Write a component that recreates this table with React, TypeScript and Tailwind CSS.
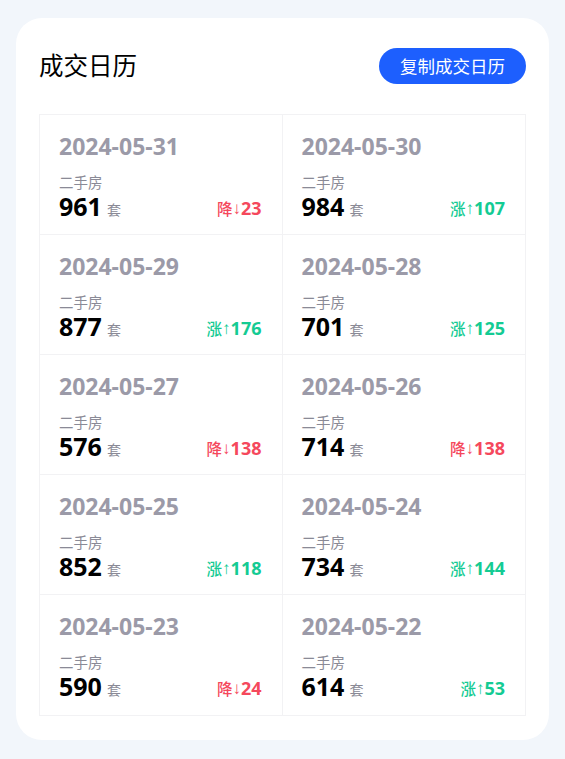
import React from "react";

type Day = { date: string; count: number; up: boolean; diff: number };

const days: Day[] = [
  { date: "2024-05-31", count: 961, up: false, diff: 23 },
  { date: "2024-05-30", count: 984, up: true, diff: 107 },
  { date: "2024-05-29", count: 877, up: true, diff: 176 },
  { date: "2024-05-28", count: 701, up: true, diff: 125 },
  { date: "2024-05-27", count: 576, up: false, diff: 138 },
  { date: "2024-05-26", count: 714, up: false, diff: 138 },
  { date: "2024-05-25", count: 852, up: true, diff: 118 },
  { date: "2024-05-24", count: 734, up: true, diff: 144 },
  { date: "2024-05-23", count: 590, up: false, diff: 24 },
  { date: "2024-05-22", count: 614, up: true, diff: 53 },
];

const DayCell = ({ d, idx }: { d: Day; idx: number }) => (
  <div
    className={
      "h-[120px] pl-[19px] pr-5 pt-[17px] border-[#f2f2f4] " +
      (idx % 2 === 0 ? "border-r " : "") +
      (idx < 8 ? "border-b" : "")
    }
  >
    <div className="text-[23px] leading-[28px] font-bold text-[#9b9aa8]">{d.date}</div>
    <div className="mt-[13px] text-[14.5px] leading-[18px] text-[#8a8a96]">二手房</div>
    <div className="flex items-end justify-between">
      <div className="flex items-end">
        <span className="text-[25px] leading-[30px] font-bold text-black">{d.count}</span>
        <span className="ml-[5px] text-[14px] leading-[22px] text-[#8a8a96]">套</span>
      </div>
      <span
        className={
          "flex items-end pb-px " + (d.up ? "text-[#14cb93]" : "text-[#f5485c]")
        }
      >
        <span className="text-[15.5px] leading-[22px] font-medium">{d.up ? "涨" : "降"}</span>
        <span
          className="text-[17px] leading-[23px]"
          style={{ fontFamily: '"Liberation Sans", sans-serif' }}
        >
          {d.up ? "↑" : "↓"}
        </span>
        <span className="text-[18px] leading-[24px] font-bold">{d.diff}</span>
      </span>
    </div>
  </div>
);

export default function App() {
  return (
    <div
      className="min-h-[759px] w-full bg-[#f2f6fb] px-4 pt-[18px]"
      style={{ fontFamily: '"Noto Sans", "Noto Sans CJK SC", sans-serif' }}
    >
      <div className="rounded-[26px] bg-white px-[23px] pt-[30px] pb-6">
        <div className="flex items-center justify-between">
          <h1 className="text-[24.5px] leading-[36px] text-black">成交日历</h1>
          <button className="h-9 rounded-full bg-[#1d5ffe] px-[21px] text-[17.5px] text-white">
            复制成交日历
          </button>
        </div>
        <div className="mt-[30px] grid grid-cols-2 border border-[#f2f2f4]">
          {days.map((d, i) => (
            <DayCell key={d.date} d={d} idx={i} />
          ))}
        </div>
      </div>
    </div>
  );
}
